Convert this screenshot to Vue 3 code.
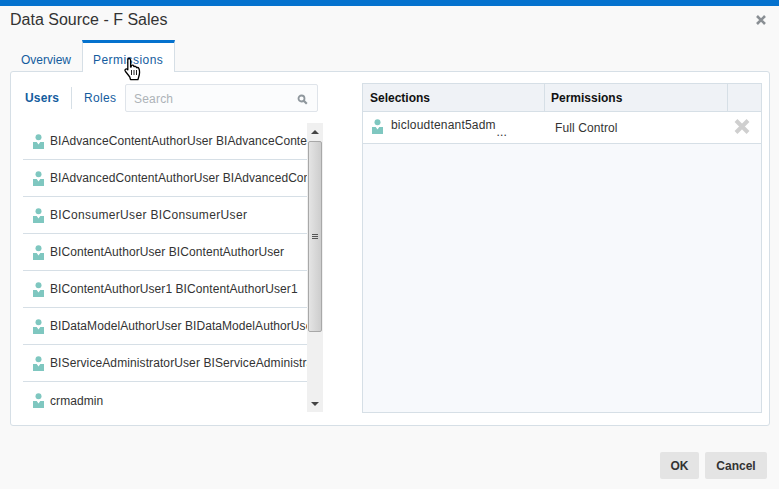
<script setup>
const users = [
  'BIAdvanceContentAuthorUser BIAdvanceContentAuthorUser',
  'BIAdvancedContentAuthorUser BIAdvancedContentAuthorUser',
  'BIConsumerUser BIConsumerUser',
  'BIContentAuthorUser BIContentAuthorUser',
  'BIContentAuthorUser1 BIContentAuthorUser1',
  'BIDataModelAuthorUser BIDataModelAuthorUser',
  'BIServiceAdministratorUser BIServiceAdministratorUser',
  'crmadmin'
]
</script>

<template>
  <div class="dialog">
    <header class="head">
      <h1 class="title">Data Source - F Sales</h1>
      <svg class="close" width="12" height="12" viewBox="0 0 12 12"><path d="M2 2l8 8M10 2l-8 8" stroke="#8a8f94" stroke-width="2.6" fill="none"/></svg>
    </header>
    <nav class="tabs">
      <a class="tab">Overview</a>
      <a class="tab active">Permissions</a>
      <svg class="hand" width="20" height="25" viewBox="0 0 20 25">
        <path d="M5 1.500c1 0 1.600.6 1.600 1.600v7l.6-.2V8.500c1-.7 2-.5 2.400.3l.3.8c1-.6 2-.4 2.400.5l.2.600c1-.4 2-.1 2.400.8 1 2.500.8 5.500-.2 8.500l-.8 2.700H6.500L5.800 20 1.500 14.500c-.7-1-.6-1.800 0-2.300.7-.5 1.500-.3 2.300.5V3.100C3.800 2.100 4.200 1.500 5 1.500z" fill="#fff" stroke="#000" stroke-width="1.300" stroke-linejoin="round"/>
        <path d="M7.500 13v5M10 13v5M12.500 13v5" stroke="#222" stroke-width="1"/>
      </svg>
    </nav>
    <main class="panel">
      <section class="left">
        <div class="filter">
          <span class="seg on">Users</span>
          <span class="seg">Roles</span>
          <div class="search">
            <span class="placeholder">Search</span>
            <svg width="11" height="11" viewBox="0 0 11 11"><circle cx="4.500" cy="4.500" r="3" fill="none" stroke="#8f979d" stroke-width="1.800"/><path d="M6.800 6.800l3 3" stroke="#8f979d" stroke-width="2.200"/></svg>
          </div>
        </div>
        <div class="listwrap">
          <ul class="list">
            <li v-for="u in users" :key="u" class="row">
              <svg class="person" width="11" height="15" viewBox="0 0 11 15"><circle cx="5.500" cy="3.300" r="3" fill="#7fc7c0"/><path d="M0 8h3.700l1.800 2.500L7.300 8H11v7H0z" fill="#7fc7c0"/></svg>
              <span class="name">{{ u }}</span>
            </li>
          </ul>
          <div class="scroll">
            <span class="arrow up"></span>
            <div class="thumb"><i></i><i></i><i></i></div>
            <span class="arrow down"></span>
          </div>
        </div>
      </section>
      <section class="table">
        <div class="thead">
          <div class="th c1">Selections</div>
          <div class="th c2">Permissions</div>
          <div class="th c3"></div>
        </div>
        <div class="tr">
          <div class="td c1 sel">
            <svg class="person" width="11" height="15" viewBox="0 0 11 15"><circle cx="5.500" cy="3.300" r="3" fill="#7fc7c0"/><path d="M0 8h3.700l1.800 2.500L7.300 8H11v7H0z" fill="#7fc7c0"/></svg>
            <div class="selname"><span>bicloudtenant5adm</span><span class="dots">...</span></div>
          </div>
          <div class="td c2 perm">Full Control</div>
          <div class="td c3 del">
            <svg width="16" height="15" viewBox="0 0 16 15"><path d="M2 1.500l12 12M14 1.500l-12 12" stroke="#cfcfcf" stroke-width="4" fill="none"/></svg>
          </div>
        </div>
      </section>
    </main>
    <footer class="foot">
      <button class="btn ok">OK</button>
      <button class="btn cancel">Cancel</button>
    </footer>
  </div>
</template>

<style>
html, body { margin: 0; background: #f9f9f9; }
</style>

<style scoped>
.dialog {
  width: 779px;
  height: 489px;
  box-sizing: border-box;
  border-top: 6px solid #0572ce;
  background: #f9f9f9;
  font-family: "Liberation Sans", Arial, sans-serif;
  display: flex;
  flex-direction: column;
  overflow: hidden;
}
.head {
  height: 34px;
  display: flex;
  align-items: center;
  justify-content: space-between;
  padding: 0 12px 6px 10px;
  box-sizing: border-box;
  flex: none;
}
.title { margin: 0; font-size: 16px; font-weight: normal; color: #333; line-height: 28px; }
.tabs {
  height: 32px;
  flex: none;
  display: flex;
  padding-left: 11px;
  position: relative;
  z-index: 1;
}
.tab {
  box-sizing: border-box;
  height: 32px;
  padding: 8px 10px 0;
  font-size: 12px;
  line-height: 18px;
  color: #145c9e;
  border-top: 3px solid transparent;
  width: 71px;
}
.tab.active {
  width: 93px;
  border: 1px solid #d6dfe6;
  border-top: 3px solid #0572ce;
  border-bottom: 0;
  background: #fff;
  letter-spacing: .45px;
}
.hand { position: absolute; left: 124px; top: 17px; z-index: 3; }
.panel {
  margin: -1px 9px 0 10px;
  height: 355px;
  box-sizing: border-box;
  flex: none;
  background: #fff;
  border: 1px solid #d6dfe6;
  border-radius: 3px;
  display: flex;
  padding: 12px 7px 13px 12px;
  gap: 39px;
}
.left { width: 300px; flex: none; display: flex; flex-direction: column; }
.filter { display: flex; align-items: center; height: 28px; flex: none; }
.seg {
  font-size: 12px;
  color: #145c9e;
  line-height: 22px;
  height: 22px;
  letter-spacing: .15px;
}
.seg.on {
  font-weight: bold;
  width: 49px;
  padding-left: 2px;
  box-sizing: border-box;
  border-right: 1px solid #d6dfe6;
}
.seg:not(.on) { margin-left: 12px; width: 41px; letter-spacing: .3px; }
.search {
  width: 193px;
  height: 28px;
  box-sizing: border-box;
  border: 1px solid #dfe4ea;
  border-radius: 2px;
  background: #fbfcfd;
  display: flex;
  align-items: center;
  justify-content: space-between;
  padding: 2px 9px 0 8px;
}
.placeholder { font-size: 12px; color: #adb3b8; letter-spacing: .2px; }
.listwrap { margin-top: 11px; height: 289px; display: flex; overflow: hidden; }
.list {
  list-style: none;
  margin: 0;
  padding: 0;
  width: 284px;
  flex: none;
  overflow: hidden;
}
.row {
  height: 37px;
  box-sizing: border-box;
  border-bottom: 1px solid #d6dfe6;
  display: flex;
  align-items: center;
  padding-left: 10px;
  white-space: nowrap;
  overflow: hidden;
  letter-spacing: .07px;
}
.row:nth-child(3) { letter-spacing: .34px; }
.row:nth-child(7) { letter-spacing: .1px; }
.person { flex: none; }
.row:last-child { border-bottom: 0; }
.name { margin-left: 6px; font-size: 12px; color: #333; }
.scroll {
  width: 16px;
  flex: none;
  background: #f0f0f0;
  display: flex;
  flex-direction: column;
  align-items: center;
}
.arrow { width: 0; height: 0; border-left: 4px solid transparent; border-right: 4px solid transparent; flex: none; }
.arrow.up { border-bottom: 4px solid #444; margin-top: 7px; }
.arrow.down { border-top: 4px solid #444; margin-top: auto; margin-bottom: 6px; }
.thumb {
  width: 14px;
  height: 191px;
  margin-top: 7px;
  box-sizing: border-box;
  border: 1px solid #a8a8a8;
  border-radius: 2px;
  background: linear-gradient(90deg, #e4e4e4, #cdcdcd);
  display: flex;
  flex-direction: column;
  align-items: center;
  justify-content: center;
  gap: 1px;
}
.thumb i { display: block; width: 6px; height: 1px; background: #555; }
.table {
  width: 400px;
  height: 330px;
  margin-top: -1px;
  flex: none;
  box-sizing: border-box;
  border: 1px solid #d6dfe6;
  background: #f7f9fc;
}
.thead { display: flex; height: 28px; box-sizing: border-box; background: #eff2f6; border-bottom: 1px solid #d6dfe6; }
.th {
  font-size: 12px;
  font-weight: bold;
  color: #111;
  line-height: 28px;
  padding-left: 7px;
  box-sizing: border-box;
  border-right: 1px solid #d6dfe6;
}
.th.c2 { padding-left: 6px; }
.c1 { width: 182px; flex: none; }
.c2 { width: 183px; flex: none; }
.c3 { flex: 1; border-right: 0; }
.tr { display: flex; height: 32px; box-sizing: border-box; background: #fff; border-bottom: 1px solid #d6dfe6; }
.sel { display: flex; padding: 7px 0 0 9px; box-sizing: border-box; }
.selname { margin-left: 8px; font-size: 12px; color: #333; width: 116px; line-height: 13px; letter-spacing: .2px; display: flex; flex-direction: column; }
.dots { align-self: flex-end; line-height: 7px; margin-top: -3px; }
.perm { font-size: 12px; color: #333; line-height: 33px; padding-left: 10px; letter-spacing: .1px; box-sizing: border-box; }
.del { padding: 7px 0 0 6px; box-sizing: border-box; }
.foot { flex: 1; display: flex; justify-content: flex-end; align-items: flex-start; gap: 6px; padding: 26px 12px 0 0; }
.btn {
  height: 27px;
  border: 0;
  border-radius: 2px;
  background: #e4e4e4;
  color: #333;
  font: bold 12px "Liberation Sans", Arial, sans-serif;
  padding: 0;
}
.ok { width: 39px; }
.cancel { width: 62px; }
</style>
